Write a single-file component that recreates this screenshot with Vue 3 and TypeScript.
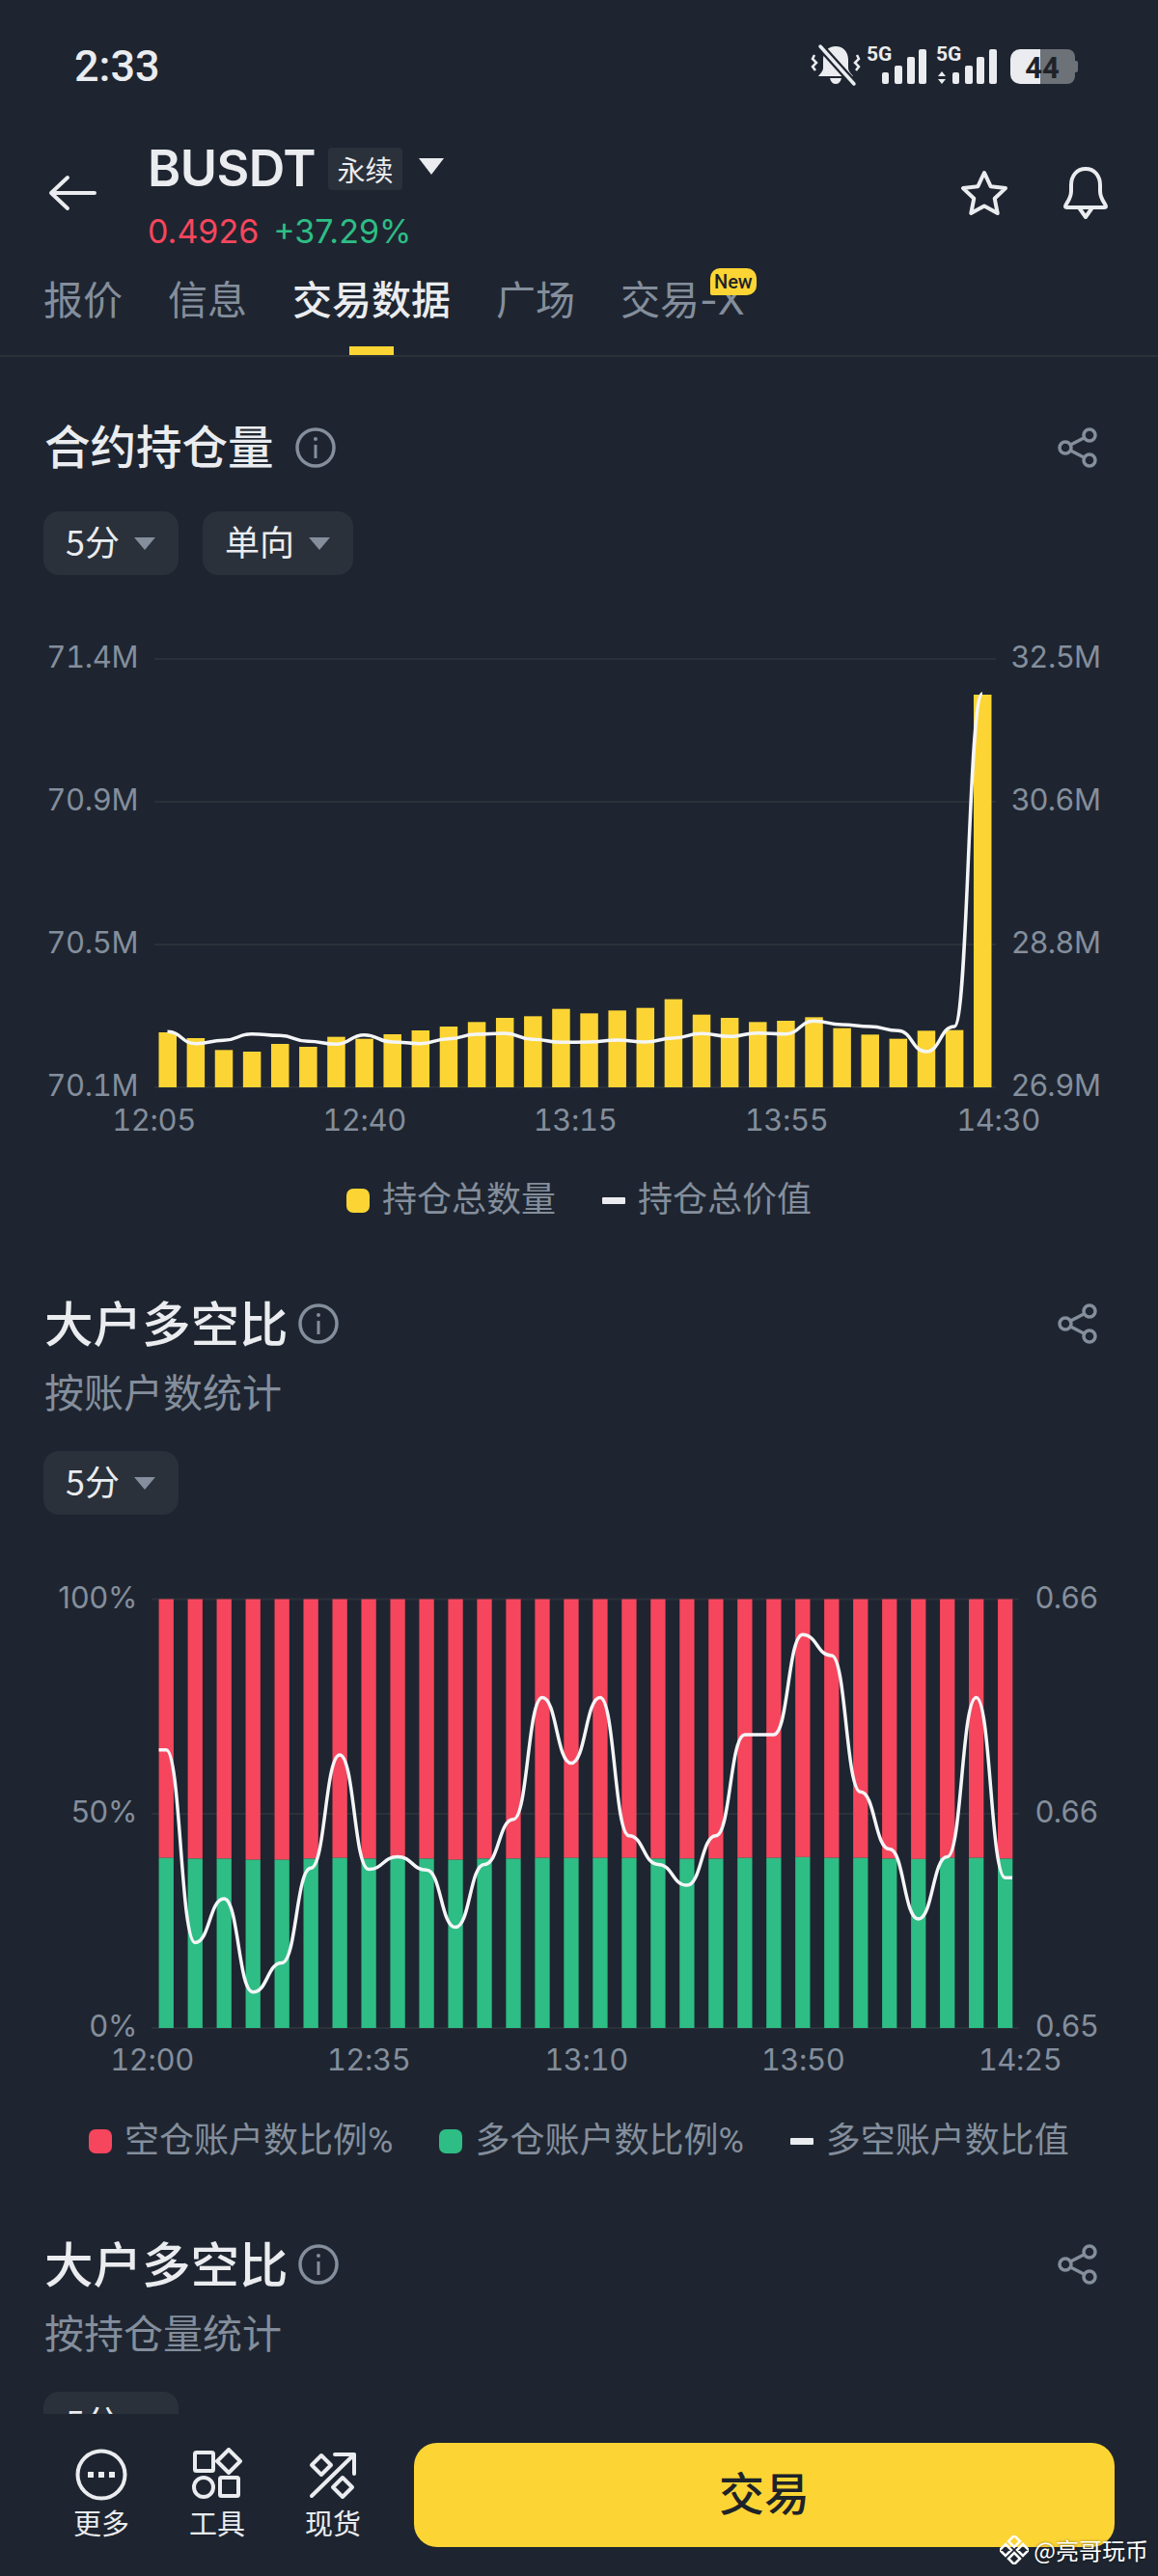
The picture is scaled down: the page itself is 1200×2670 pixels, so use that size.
<template>
  <div class="app">
    <div class="status-bar">
      <span class="time">2:33</span>
      <svg class="status-icons" viewBox="840 44 280 46" width="280" height="46">
        <g fill="#eaecef">
          <path d="M866 47c-8 0-13 6-13 14v8c0 4-3 6-5 9h36c-2-3-5-5-5-9v-8c0-8-5-14-13-14zM860 80h12c-1 4-3 6-6 6s-5-2-6-6z" />
          <rect x="914" y="74" width="7" height="12" rx="2" />
          <rect x="927" y="67" width="8" height="19" rx="2" />
          <rect x="940" y="58" width="8" height="28" rx="2" />
          <rect x="952" y="50" width="8" height="36" rx="2" />
          <path d="M976 73l4 5h-8zM976 86l-4-5h8z" />
          <rect x="987" y="74" width="7" height="12" rx="2" />
          <rect x="1000" y="67" width="8" height="19" rx="2" />
          <rect x="1012" y="58" width="8" height="28" rx="2" />
          <rect x="1025" y="50" width="8" height="36" rx="2" />
        </g>
        <path d="M850 47l35 39" stroke="#1e2530" stroke-width="8" />
        <path d="M850 47l35 39" stroke="#eaecef" stroke-width="3.500" stroke-linecap="round" />
        <path d="M844 56l-2 4 4 4-4 4 3 4M888 56l2 4-4 4 4 4-3 4" fill="none" stroke="#eaecef" stroke-width="2.500" />
        <text x="898" y="62" class="net">5G</text>
        <text x="970" y="62" class="net">5G</text>
        <path d="M1078 50h28a8 8 0 0 1 8 8v20a8 8 0 0 1-8 8h-28z" fill="#6d7178" />
        <path d="M1114 62h1a2 2 0 0 1 2 2v8a2 2 0 0 1-2 2h-1z" fill="#6d7178" />
        <path d="M1078 50h-21a10 10 0 0 0-10 10v16a10 10 0 0 0 10 10h21z" fill="#eaecef" />
        <text x="1080" y="80" class="batt">44</text>
      </svg>
    </div>

    <div class="header">
      <svg class="back" viewBox="0 0 50 38" width="50" height="38">
        <path d="M48 19H4M20 3L3 19l17 16" fill="none" stroke="#eaecef" stroke-width="4" stroke-linecap="round" stroke-linejoin="round" />
      </svg>
      <div class="symbol">
        <div class="symbol-top">
          <span class="name">BUSDT</span>
          <span class="tag">永续</span>
          <span class="caret"></span>
        </div>
        <div class="quote">
          <span class="price">0.4926</span>
          <span class="change">+37.29%</span>
        </div>
      </div>
      <div class="header-actions">
        <svg viewBox="0 0 52 50" width="52" height="50">
          <path d="M26 4l6.6 14.2 15.4 1.900-11.300 10.600 3 15.300L26 38.400 12.300 46l3-15.300L4 20.100l15.400-1.900z" fill="none" stroke="#eaecef" stroke-width="4" stroke-linejoin="round" />
        </svg>
        <svg viewBox="0 0 54 56" width="54" height="56">
          <path d="M6 42c0-3 6-7 6-16v-6C12 10 18 3 27 3s15 7 15 17v6c0 9 6 13 6 16 0 1-1 1-2 1H8c-1 0-2 0-2-1zM20 43l7 10 7-10" fill="none" stroke="#eaecef" stroke-width="4" stroke-linejoin="round" />
        </svg>
      </div>
    </div>

    <div class="tabs">
      <div v-for="tab in tabs" :key="tab" class="tab" :class="{ active: tab === '交易数据' }">
        {{ tab }}
        <span v-if="tab === '交易-X'" class="badge">New</span>
      </div>
    </div>

    <div class="content">
      <section class="section first">
        <div class="title-row">
          <h2 class="title">合约持仓量</h2>
          <svg class="info wide" viewBox="0 0 42 42" width="42" height="42">
            <circle cx="21" cy="21" r="19" fill="none" stroke="#848e9c" stroke-width="3.500" />
            <path d="M21 18v14" stroke="#848e9c" stroke-width="3" />
            <circle cx="21" cy="12" r="2" fill="#848e9c" />
          </svg>
          <svg class="share" viewBox="0 0 42 42" width="42" height="42">
            <g fill="none" stroke="#848e9c" stroke-width="3.500">
              <circle cx="33" cy="8" r="6" />
              <circle cx="8" cy="21" r="6" />
              <circle cx="33" cy="34" r="6" />
              <path d="M13.500 18L28 10.500M13.500 24L28 31.500" />
            </g>
          </svg>
        </div>
        <div class="pills">
          <div class="pill">5分<span class="tri"></span></div>
          <div class="pill">单向<span class="tri"></span></div>
        </div>

        <svg class="chart chart-one" viewBox="0 650 1200 530" width="1200" height="530">
          <path v-for="y in [683, 831, 979, 1127]" :key="y" :d="`M160 ${y}H1032`" class="grid" />
          <rect v-for="bar in oiBars" :key="bar.x" :x="bar.x" :y="bar.y" width="18.500" :height="1127 - bar.y" fill="#fcd535" />
          <path :d="oiLine" class="curve" />
          <text v-for="l in oiLeft" :key="l.t" x="143" :y="l.y" text-anchor="end" class="axis tnum">{{ l.t }}</text>
          <text v-for="l in oiRight" :key="l.t" x="1141" :y="l.y" text-anchor="end" class="axis">{{ l.t }}</text>
          <text v-for="l in oiTimes" :key="l.t" :x="l.x" y="1172" text-anchor="middle" class="axis tnum">{{ l.t }}</text>
        </svg>

        <div class="legend legend-one">
          <div class="legend-item"><i class="swatch yellow"></i>持仓总数量</div>
          <div class="legend-item"><i class="dash"></i>持仓总价值</div>
        </div>
      </section>

      <section class="section">
        <div class="title-row">
          <h2 class="title big">大户多空比</h2>
          <svg class="info" viewBox="0 0 42 42" width="42" height="42">
            <circle cx="21" cy="21" r="19" fill="none" stroke="#848e9c" stroke-width="3.500" />
            <path d="M21 18v14" stroke="#848e9c" stroke-width="3" />
            <circle cx="21" cy="12" r="2" fill="#848e9c" />
          </svg>
          <svg class="share" viewBox="0 0 42 42" width="42" height="42">
            <g fill="none" stroke="#848e9c" stroke-width="3.500">
              <circle cx="33" cy="8" r="6" />
              <circle cx="8" cy="21" r="6" />
              <circle cx="33" cy="34" r="6" />
              <path d="M13.500 18L28 10.500M13.500 24L28 31.500" />
            </g>
          </svg>
        </div>
        <div class="sub">按账户数统计</div>
        <div class="pills">
          <div class="pill">5分<span class="tri"></span></div>
        </div>

        <svg class="chart chart-two" viewBox="0 1630 1200 530" width="1200" height="530">
          <path v-for="y in [1657.500, 1880, 2102]" :key="y" :d="`M157 ${y}H1056`" class="grid" />
          <g v-for="bar in ratioBars" :key="bar.x">
            <rect :x="bar.x" y="1657.500" width="15.300" :height="bar.split - 1657.500" fill="#f6465d" />
            <rect :x="bar.x" :y="bar.split" width="15.300" :height="2102 - bar.split" fill="#2ebd85" />
          </g>
          <path :d="ratioLine" class="curve" />
          <text v-for="l in ratioLeft" :key="l.t" x="142.500" :y="l.y" text-anchor="end" class="axis">{{ l.t }}</text>
          <text v-for="l in ratioRight" :key="l.y" x="1138" :y="l.y" text-anchor="end" class="axis">{{ l.t }}</text>
          <text v-for="l in ratioTimes" :key="l.t" :x="l.x" y="2146" text-anchor="middle" class="axis tnum">{{ l.t }}</text>
        </svg>

        <div class="legend legend-two">
          <div class="legend-item"><i class="swatch red"></i>空仓账户数比例%</div>
          <div class="legend-item"><i class="swatch green"></i>多仓账户数比例%</div>
          <div class="legend-item"><i class="dash"></i>多空账户数比值</div>
        </div>
      </section>

      <section class="section">
        <div class="title-row">
          <h2 class="title big">大户多空比</h2>
          <svg class="info" viewBox="0 0 42 42" width="42" height="42">
            <circle cx="21" cy="21" r="19" fill="none" stroke="#848e9c" stroke-width="3.500" />
            <path d="M21 18v14" stroke="#848e9c" stroke-width="3" />
            <circle cx="21" cy="12" r="2" fill="#848e9c" />
          </svg>
          <svg class="share" viewBox="0 0 42 42" width="42" height="42">
            <g fill="none" stroke="#848e9c" stroke-width="3.500">
              <circle cx="33" cy="8" r="6" />
              <circle cx="8" cy="21" r="6" />
              <circle cx="33" cy="34" r="6" />
              <path d="M13.500 18L28 10.500M13.500 24L28 31.500" />
            </g>
          </svg>
        </div>
        <div class="sub">按持仓量统计</div>
        <div class="pills">
          <div class="pill">5分<span class="tri"></span></div>
        </div>
      </section>
    </div>

    <div class="footer">
      <div class="tool">
        <svg viewBox="0 0 60 56" width="60" height="56">
          <circle cx="30" cy="28" r="24.500" fill="none" stroke="#eaecef" stroke-width="4" />
          <rect x="16" y="25" width="6" height="6" fill="#eaecef" />
          <rect x="27" y="25" width="6" height="6" fill="#eaecef" />
          <rect x="38" y="25" width="6" height="6" fill="#eaecef" />
        </svg>
        <span>更多</span>
      </div>
      <div class="tool">
        <svg viewBox="0 0 60 56" width="60" height="56">
          <g fill="none" stroke="#eaecef" stroke-width="4" stroke-linejoin="round">
            <rect x="7" y="5" width="19" height="19" rx="1.500" />
            <path d="M42 2l12 12-12 12-12-12z" />
            <circle cx="16" cy="41" r="10" />
            <rect x="33" y="31" width="19" height="19" rx="1.500" />
          </g>
        </svg>
        <span>工具</span>
      </div>
      <div class="tool">
        <svg viewBox="0 0 60 56" width="60" height="56">
          <g fill="none" stroke="#eaecef" stroke-width="4" stroke-linejoin="round" stroke-linecap="round">
            <path d="M8 50L52 7M32 7h20v20" />
            <path d="M18 8l10 10-10 10L8 18z" />
            <path d="M40 31l10 10-10 10-10-10z" />
          </g>
        </svg>
        <span>现货</span>
      </div>
      <div class="trade">交易</div>
    </div>

    <div class="watermark">
      <svg viewBox="0 0 30 30" width="30" height="30">
        <path d="M15 0l6 6-6 6-6-6zM6 9l6 6-6 6-6-6zM24 9l6 6-6 6-6-6zM15 18l6 6-6 6-6-6z" fill="none" stroke="#fff" stroke-width="2.500" />
      </svg>
      <span>@亮哥玩币</span>
    </div>
  </div>
</template>

<script setup lang="ts">
type Label = { t: string; y: number }
type Tick = { t: string; x: number }

const tabs = ['报价', '信息', '交易数据', '广场', '交易-X']

// every point gets a flat tangent, the chart lib draws its lines this way
const bumpPath = (pts: number[][]) => {
  let d = `M${pts[0][0]} ${pts[0][1]}`
  for (let i = 1; i < pts.length; i++) {
    const [x0, y0] = pts[i - 1]
    const [x1, y1] = pts[i]
    const mx = (x0 + x1) / 2
    d += ` C${mx} ${y0} ${mx} ${y1} ${x1} ${y1}`
  }
  return d
}

const oiTops = [
  570, 588, 625, 630, 606, 615, 584, 590, 576, 564, 552, 538, 525, 520, 497, 511, 502, 494, 467, 515, 525, 538, 534,
  523, 557, 577, 590, 565, 563
].map((v) => 880 + v / 3)
oiTops.push(720)

const oiBars = oiTops.map((y, i) => ({ x: 164.5 + 29.12 * i, y }))

const oiValues = [
  568, 605, 595, 575, 580, 598, 607, 578, 600, 605, 590, 576, 573, 592, 601, 600, 594, 600, 588, 574, 583, 572, 575,
  535, 546, 552, 565, 630, 552
].map((v) => 880 + v / 3)
oiValues.push(719)

const oiLine = bumpPath(oiValues.map((y, i) => [173.5 + 29.12 * i, y]))

const oiLeft: Label[] = [
  { t: '71.4M', y: 692 },
  { t: '70.9M', y: 840 },
  { t: '70.5M', y: 988 },
  { t: '70.1M', y: 1136 }
]
const oiRight: Label[] = [
  { t: '32.5M', y: 692 },
  { t: '30.6M', y: 840 },
  { t: '28.8M', y: 988 },
  { t: '26.9M', y: 1136 }
]
const oiTimes: Tick[] = [
  { t: '12:05', x: 159.5 },
  { t: '12:40', x: 377.5 },
  { t: '13:15', x: 596 },
  { t: '13:55', x: 815 },
  { t: '14:30', x: 1034.5 }
]

const ratioSplit = [
  773, 775, 775, 778, 778, 775, 773, 775, 773, 775, 778, 775, 775, 773, 773, 773, 773, 775, 775, 775, 773, 773, 771,
  773, 773, 775, 776, 773, 773, 775
]
const ratioBars = ratioSplit.map((v, i) => ({ x: 164.6 + 29.98 * i, split: 1620 + v / 2.529 }))

const ratioValues = [
  490, 995, 880, 1125, 1048, 800, 503, 803, 770, 805, 955, 790, 672, 353, 525, 353, 715, 790, 845, 715, 450, 450, 188,
  243, 600, 750, 933, 770, 353, 825
].map((v) => 1620 + v / 2.529)

const ratioLine = `M164.6 ${ratioValues[0]} L` + bumpPath(ratioValues.map((y, i) => [172.2 + 29.98 * i, y])).slice(1) + ' H1049'

const ratioLeft: Label[] = [
  { t: '100%', y: 1667 },
  { t: '50%', y: 1889 },
  { t: '0%', y: 2111 }
]
const ratioRight: Label[] = [
  { t: '0.66', y: 1667 },
  { t: '0.66', y: 1889 },
  { t: '0.65', y: 2111 }
]
const ratioTimes: Tick[] = [
  { t: '12:00', x: 157.5 },
  { t: '12:35', x: 382 },
  { t: '13:10', x: 607.5 },
  { t: '13:50', x: 832 },
  { t: '14:25', x: 1057 }
]
</script>

<style>
html,
body {
  margin: 0;
  background: #1e2530;
}
</style>

<style scoped>
.app {
  position: relative;
  width: 1200px;
  height: 2670px;
  display: flex;
  flex-direction: column;
  overflow: hidden;
  background: #1e2530;
  color: #eaecef;
  font-family: 'Inter', 'Noto Sans CJK SC', sans-serif;
}

.status-bar {
  height: 134px;
  flex: none;
  display: flex;
  align-items: flex-start;
  justify-content: space-between;
  padding: 45px 80px 0 77px;
  box-sizing: border-box;
}

.time {
  font-family: 'Roboto', sans-serif;
  font-size: 45px;
  line-height: 48px;
  font-weight: 500;
}

.header {
  height: 124px;
  flex: none;
  display: flex;
  align-items: flex-start;
  padding-left: 50px;
  padding-right: 48px;
}

.back {
  margin-top: 47px;
  flex: none;
}

.symbol {
  margin-left: 53px;
}

.symbol-top {
  display: flex;
  align-items: center;
  height: 62px;
  margin-top: 10px;
}

.name {
  font-size: 52px;
  font-weight: 600;
  line-height: 62px;
  letter-spacing: -0.5px;
}

.tag {
  margin-left: 13px;
  width: 77px;
  height: 44px;
  line-height: 44px;
  text-align: center;
  font-size: 29px;
  background: #2a313b;
  border-radius: 4px;
  font-family: 'Noto Sans CJK SC', sans-serif;
}

.caret {
  margin-left: 17px;
  margin-top: -5px;
  width: 0;
  height: 0;
  border-left: 13px solid transparent;
  border-right: 13px solid transparent;
  border-top: 17px solid #eaecef;
}

.quote {
  display: flex;
  gap: 15px;
  font-size: 34px;
  line-height: 40px;
  margin-top: 14px;
}

.price {
  color: #f6465d;
}

.change {
  color: #2ebd85;
}

.header-actions {
  margin-left: auto;
  display: flex;
  align-items: center;
  gap: 52px;
  height: 60px;
  margin-top: 36px;
}

.tabs {
  position: relative;
  height: 112px;
  flex: none;
  box-sizing: border-box;
  display: flex;
  gap: 47px;
  padding-left: 45px;
  border-bottom: 2px solid #2b3139;
  font-family: 'Inter', 'Noto Sans CJK SC', sans-serif;
  font-size: 41px;
  line-height: 60px;
  color: #848e9c;
}

.tab {
  position: relative;
  padding-top: 23px;
  height: 110px;
  box-sizing: border-box;
}

.tab.active {
  color: #eaecef;
  font-weight: 500;
}

.tab.active::after {
  content: '';
  position: absolute;
  left: 59px;
  bottom: 0;
  width: 46px;
  height: 9px;
  background: #fcd535;
}

.badge {
  position: absolute;
  right: -12px;
  top: 20px;
  width: 48px;
  height: 28px;
  line-height: 28px;
  text-align: center;
  border-radius: 10px 10px 10px 2px;
  background: #fcd535;
  color: #1e2329;
  font-family: 'Roboto', sans-serif;
  font-size: 20px;
  font-weight: 500;
}

.content {
  flex: 1;
  min-height: 0;
  overflow: hidden;
}

.section {
  margin-top: 76px;
}

.section.first {
  margin-top: 64px;
}

.title-row {
  position: relative;
  height: 60px;
  display: flex;
  align-items: center;
  padding: 0 62px 0 46px;
}

.title {
  margin: 0 0 6px;
  font-family: 'Noto Sans CJK SC', sans-serif;
  font-size: 47.500px;
  line-height: 54px;
  font-weight: 500;
  color: #eaecef;
}

.title.big {
  font-size: 50.500px;
}

.info {
  margin-left: 10px;
  flex: none;
}

.info.wide {
  margin-left: 22px;
}

.share {
  margin-left: auto;
  flex: none;
}

.sub {
  margin-top: 14px;
  padding-left: 46px;
  font-family: 'Noto Sans CJK SC', sans-serif;
  font-size: 41px;
  line-height: 50px;
  color: #848e9c;
}

.pills {
  display: flex;
  gap: 25px;
  margin-top: 36px;
  padding-left: 45px;
}

.sub + .pills {
  margin-top: 38px;
}

.pill {
  height: 66px;
  display: flex;
  align-items: center;
  gap: 15px;
  padding: 0 24px 7px 23px;
  box-sizing: border-box;
  background: #2a313b;
  border-radius: 16px;
  font-family: 'Noto Sans CJK SC', 'Roboto', sans-serif;
  font-size: 36px;
  line-height: 44px;
  color: #eaecef;
}

.tri {
  width: 0;
  height: 0;
  margin-top: 7px;
  border-left: 11px solid transparent;
  border-right: 11px solid transparent;
  border-top: 13px solid #848e9c;
}

.chart {
  display: block;
}

.chart-one {
  margin-top: 54px;
}

.chart-two {
  margin-top: 60px;
}

.grid {
  stroke: #2b3139;
  stroke-width: 2;
}

.curve {
  fill: none;
  stroke: #f4f5f7;
  stroke-width: 3.500;
}

.axis {
  fill: #848e9c;
  font-family: 'Inter', sans-serif;
  font-size: 31px;
}

.tnum {
  font-variant-numeric: tabular-nums;
  letter-spacing: -0.4px;
}

.net {
  fill: #eaecef;
  font-family: 'Roboto', sans-serif;
  font-size: 21px;
  font-weight: 700;
}

.batt {
  fill: #1e2329;
  font-family: 'Roboto', sans-serif;
  font-size: 31px;
  font-weight: 700;
  text-anchor: middle;
}

.legend {
  height: 44px;
  display: flex;
  justify-content: center;
  gap: 48px;
  font-family: 'Roboto', 'Noto Sans CJK SC', sans-serif;
  font-size: 36px;
  line-height: 44px;
  color: #848e9c;
}

.legend-one {
  margin-top: 42px;
}

.legend-two {
  margin-top: 37px;
}

.legend-item {
  display: flex;
  align-items: center;
  gap: 13px;
  height: 44px;
}

.swatch {
  width: 24px;
  height: 25px;
  border-radius: 7px;
}

.yellow {
  background: #fcd535;
}

.red {
  background: #f6465d;
}

.green {
  background: #2ebd85;
}

.dash {
  width: 24px;
  height: 7px;
  background: #eaecef;
  border-radius: 1px;
}

.footer {
  position: relative;
  height: 168px;
  flex: none;
  display: flex;
  align-items: flex-start;
  padding-left: 45px;
  background: #1e2530;
}

.tool {
  width: 120px;
  display: flex;
  flex-direction: column;
  align-items: center;
  margin-top: 35px;
  font-family: 'Noto Sans CJK SC', sans-serif;
  font-size: 29px;
  line-height: 36px;
  color: #eaecef;
}

.tool span {
  margin-top: 3px;
}

.trade {
  margin-left: 24px;
  margin-top: 30px;
  width: 726px;
  height: 108px;
  line-height: 100px;
  text-align: center;
  border-radius: 24px;
  background: #fcd535;
  color: #1e2329;
  font-family: 'Noto Sans CJK SC', sans-serif;
  font-size: 47px;
  font-weight: 500;
}

.watermark {
  position: absolute;
  right: 10px;
  bottom: 12px;
  display: flex;
  align-items: center;
  gap: 5px;
  color: #fff;
  font-family: 'Noto Sans CJK SC', sans-serif;
  font-size: 24px;
  line-height: 30px;
  text-shadow: 0 0 3px rgba(0, 0, 0, 0.5);
}
</style>
